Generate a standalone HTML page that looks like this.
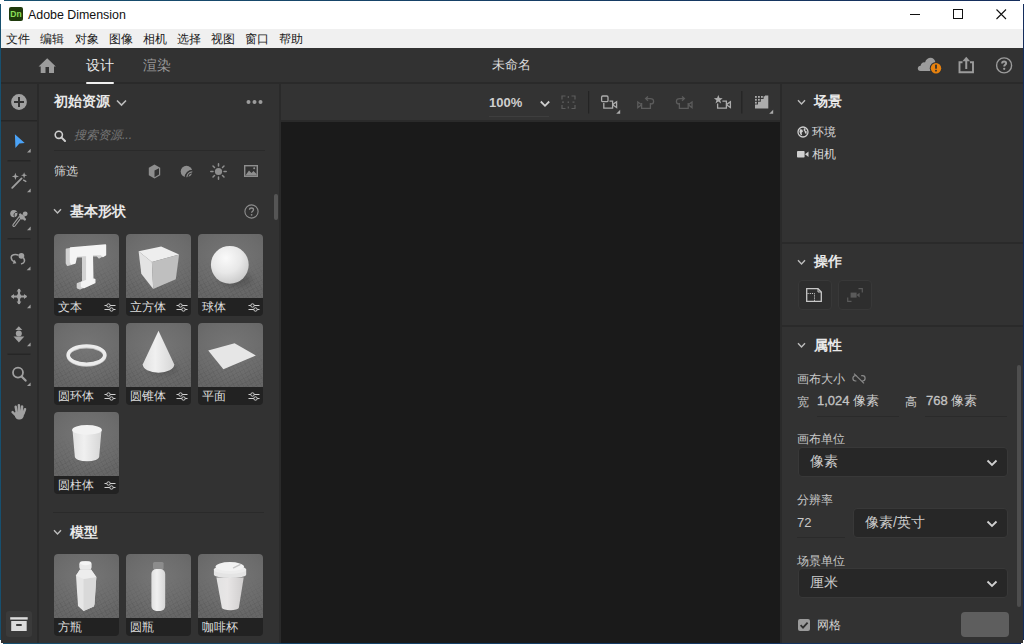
<!DOCTYPE html>
<html><head><meta charset="utf-8">
<style>
*{margin:0;padding:0;box-sizing:border-box}
html,body{width:1024px;height:644px;overflow:hidden;background:#fff;font-family:"Liberation Sans",sans-serif}
.a{position:absolute}
#frame{position:absolute;left:0;top:0;width:1024px;height:644px;background:linear-gradient(90deg,#17506f,#152d5c)}
#title{left:1px;top:1px;width:1022px;height:28px;background:#fff}
#menu{left:1px;top:29px;width:1022px;height:19px;background:#f0f0f0}
.mi{position:absolute;top:32px;font-size:11.5px;color:#1a1a1a;line-height:14px}
#topbar{left:1px;top:48px;width:1022px;height:34px;background:#323232}
#topline{left:1px;top:82px;width:1022px;height:2px;background:#2a2a2a}
#tools{left:1px;top:84px;width:36px;height:559px;background:#323232}
#toolsep{left:37px;top:84px;width:2px;height:559px;background:#2a2a2a}
#assets{left:39px;top:84px;width:240px;height:559px;background:#323232}
#asssep{left:279px;top:84px;width:2px;height:559px;background:#2a2a2a}
#vtool{left:281px;top:84px;width:499px;height:37px;background:#333}
#vline{left:281px;top:120px;width:499px;height:2px;background:#2a2a2a}
#canvas{left:281px;top:122px;width:499px;height:521px;background:#1a1a1a}
#rsep{left:780px;top:84px;width:2px;height:559px;background:#2a2a2a}
#right{left:782px;top:84px;width:241px;height:559px;background:#323232}
.w{color:#e6e6e6}
.h{font-weight:bold;font-size:14px;color:#e8e8e8;line-height:16px}
.t12{font-size:12px;line-height:14px;color:#d6d6d6}
.thumb{position:absolute;width:65px;height:82px;border-radius:4px;overflow:hidden;background:#222}
.thumb .img{position:absolute;left:0;top:0;width:65px;height:64px;background:radial-gradient(ellipse 70% 60% at 50% 40%,#767676,#6c6c6c 70%,#666 100%)}
.thumb .img::before{content:"";position:absolute;left:0;top:0;width:65px;height:64px;background:repeating-linear-gradient(62deg,rgba(0,0,0,0.045) 0 1px,transparent 1px 4px),repeating-linear-gradient(-28deg,rgba(0,0,0,0.045) 0 1px,transparent 1px 4px);-webkit-mask-image:linear-gradient(transparent 35%,#000 80%)}
.thumb .img svg{position:absolute;left:0;top:0}
.thumb .lab{position:absolute;left:4px;top:66px;font-size:11.5px;line-height:14px;color:#ddd;white-space:nowrap}
.thumb svg.sl{position:absolute;left:50px;top:69px}
.num{-webkit-text-stroke:0.3px #c4c4c4;color:#c4c4c4}
.hsep{position:absolute;height:2px;background:#2a2a2a}
.dd{position:absolute;background:#272727;border-radius:4px;border:1px solid #383838}
.dd .v{position:absolute;left:11px;top:5px;font-size:14px;line-height:16px;color:#cccccc}
.dd svg{position:absolute;right:9px;top:11px}
</style></head><body>
<div id="frame"></div>
<div id="title" class="a"></div>
<div class="a" style="left:0;top:0;width:4px;height:4px;background:#fff"></div>
<div class="a" style="left:1020px;top:0;width:4px;height:4px;background:#fff"></div>
<div class="a" style="left:0;top:640px;width:3px;height:4px;background:#fff"></div>
<div class="a" style="left:1021px;top:640px;width:3px;height:4px;background:#fff"></div>

<div class="a" style="left:9px;top:7px;width:14px;height:14px;border-radius:2px;background:#1f3a0c"></div>
<div class="a" style="left:9px;top:8px;width:14px;font-size:8.5px;line-height:12px;font-weight:bold;color:#8ee05a;text-align:center">Dn</div>
<div class="a" style="left:28px;top:8px;font-size:12.4px;line-height:15px;color:#111">Adobe Dimension</div>
<div class="a" style="left:910px;top:14px;width:10px;height:1px;background:#111"></div>
<div class="a" style="left:953px;top:9px;width:10px;height:10px;border:1px solid #111"></div>
<svg class="a" style="left:996px;top:9px" width="11" height="11"><path d="M0.5 0.5L10 10M10 0.5L0.5 10" stroke="#111" stroke-width="1.1"/></svg>
<div id="menu" class="a"></div>
<div class="mi" style="left:6px">文件</div>
<div class="mi" style="left:40px">编辑</div>
<div class="mi" style="left:75px">对象</div>
<div class="mi" style="left:109px">图像</div>
<div class="mi" style="left:143px">相机</div>
<div class="mi" style="left:177px">选择</div>
<div class="mi" style="left:211px">视图</div>
<div class="mi" style="left:245px">窗口</div>
<div class="mi" style="left:279px">帮助</div>
<div id="topbar" class="a"></div>
<div id="topline" class="a"></div>
<div id="tools" class="a"></div>
<div id="toolsep" class="a"></div>
<div id="assets" class="a"></div>
<div id="asssep" class="a"></div>
<div id="vtool" class="a"></div>
<div id="vline" class="a"></div>
<div id="canvas" class="a"></div>
<div id="rsep" class="a"></div>
<div id="right" class="a"></div>

<!-- topbar content -->
<svg class="a" style="left:38px;top:58px" width="19" height="16" viewBox="0 0 19 16"><path d="M9.2 0.3L17.8 8.6H16V15H11V9H7.5V15H2.7V8.6H0.6Z" fill="#9c9c9c"/></svg>
<div class="a" style="left:86px;top:57px;font-size:14px;line-height:16px;color:#e8e8e8">设计</div>
<div class="a" style="left:143px;top:57px;font-size:14px;line-height:16px;color:#9a9a9a">渲染</div>
<div class="a" style="left:86px;top:82px;width:28px;height:2px;border-radius:1px;background:#f0f0f0"></div>
<div class="a" style="left:492px;top:57px;font-size:13px;line-height:16px;color:#dcdcdc">未命名</div>
<svg class="a" style="left:917px;top:57px" width="26" height="18" viewBox="0 0 26 18"><path d="M3.5 14C1.5 14 0.8 12.6 0.8 11.5C0.8 10 2 8.8 3.6 8.8C4 6.2 6 4.8 8 5.4C9 2.2 11.5 0.6 14 0.8C16.6 1 18.4 3.2 18.4 6C18.4 6.6 18.3 7 18.2 7.4L16 14Z" fill="#9c9c9c"/><circle cx="19" cy="11.2" r="6.2" fill="#323232"/><circle cx="19" cy="11.2" r="5.2" fill="#e8820e"/><rect x="18.1" y="7.6" width="1.8" height="4.2" rx="0.6" fill="#323232"/><rect x="18.1" y="12.8" width="1.8" height="1.8" rx="0.6" fill="#323232"/></svg>
<svg class="a" style="left:958px;top:56px" width="17" height="18" viewBox="0 0 17 18"><path d="M4.5 6.2H1.5V16.2H15V6.2H12" fill="none" stroke="#9c9c9c" stroke-width="1.9"/><path d="M8.25 13V4.5" stroke="#9c9c9c" stroke-width="2"/><path d="M8.25 0.8L4.4 5.2H12.1Z" fill="#9c9c9c"/></svg>
<svg class="a" style="left:995px;top:56px" width="18" height="18" viewBox="0 0 18 18"><circle cx="9.1" cy="9.4" r="7.5" fill="none" stroke="#9c9c9c" stroke-width="1.4"/><path d="M7.1 7.4C7.1 6.1 8 5.5 9.1 5.5C10.3 5.5 11.1 6.2 11.1 7.3C11.1 8.8 9.2 8.9 9.2 10.6" fill="none" stroke="#9c9c9c" stroke-width="2"/><circle cx="9.2" cy="12.8" r="1.15" fill="#9c9c9c"/></svg>


<svg class="a" style="left:0;top:84px" width="38" height="560" viewBox="0 84 38 560">
<circle cx="19" cy="102" r="7.9" fill="#a0a0a0"/>
<path d="M14 102H24M19 97V107" stroke="#323232" stroke-width="2"/>
<rect x="1" y="120" width="36" height="1.5" fill="#262626"/>
<path d="M14.9 134.2L24.7 143L19.4 143.4L15.4 147.9Z" fill="#4ba3f7"/>
<path d="M27 152.5H30.7V148.8Z" fill="#a0a0a0"/>
<rect x="7.5" y="160" width="23" height="1.5" fill="#262626"/>
<path d="M12.2 187.8L21.6 178.4" stroke="#a0a0a0" stroke-width="1.8" stroke-linecap="round"/>
<path d="M15.4 172.8L16.3 175.5L19 176.4L16.3 177.3L15.4 180L14.5 177.3L11.8 176.4L14.5 175.5Z" fill="#a0a0a0"/>
<path d="M24.1 172.2L24.9 174.5L27.2 175.3L24.9 176.1L24.1 178.4L23.3 176.1L21 175.3L23.3 174.5Z" fill="#a0a0a0"/>
<path d="M23.6 180.2L25.8 181.4" stroke="#a0a0a0" stroke-width="1.4" stroke-linecap="round"/>
<path d="M27 192.3H30.7V188.6Z" fill="#a0a0a0"/>
<circle cx="13.8" cy="213.6" r="3.6" fill="#a0a0a0"/>
<path d="M14.6 216.6A2.6 2.6 0 0 1 17.2 212.4" stroke="#323232" stroke-width="1" fill="none"/>
<path d="M14 225.3L20.3 217" stroke="#a0a0a0" stroke-width="3.4" stroke-linecap="round"/>
<path d="M14 225.3L20.3 217" stroke="#323232" stroke-width="1.2" stroke-linecap="round"/>
<path d="M19.2 217.2L22.4 214.2L25 216.8L22 220Z" fill="#a0a0a0"/>
<path d="M20.2 214.6L24.8 219.4" stroke="#a0a0a0" stroke-width="2.4" stroke-linecap="round"/>
<circle cx="25.2" cy="213.8" r="2.4" fill="#a0a0a0"/>
<path d="M27 230.3H30.7V226.6Z" fill="#a0a0a0"/>
<rect x="7.5" y="238" width="23" height="1.5" fill="#262626"/>
<circle cx="21.4" cy="255.8" r="2.9" fill="#a0a0a0"/>
<path d="M18.6 255.2C15 253.8 11.2 254.8 11.2 257.6C11.2 259.6 12.6 261 14.4 261.6" stroke="#a0a0a0" stroke-width="1.5" fill="none"/>
<path d="M12.6 263.8L16.4 263.2L14.6 259.8Z" fill="#a0a0a0"/>
<path d="M23.6 258C25.2 260.4 24.6 263.4 21.6 263.8" stroke="#a0a0a0" stroke-width="1.5" fill="none" stroke-linecap="round"/>
<path d="M26.6 270.2H30.5V266.4Z" fill="#a0a0a0"/>
<path d="M19 289V304M11.5 296.5H26.5" stroke="#a0a0a0" stroke-width="2.2"/>
<path d="M19 288.5L16.6 291.5H21.4Z M19 304.5L16.6 301.5H21.4Z M11 296.5L14 294.1V298.9Z M27 296.5L24 294.1V298.9Z" fill="#a0a0a0"/>
<circle cx="19" cy="296.5" r="2.4" fill="#a0a0a0"/>
<path d="M27 308.3H30.6V304.6Z" fill="#a0a0a0"/>
<path d="M18.8 326.2L15.3 329.9H22.3Z" fill="#a0a0a0"/>
<circle cx="18.8" cy="333.4" r="3" fill="#a0a0a0"/>
<path d="M13.5 336.6H24.3L18.9 342.4Z" fill="#a0a0a0"/>
<path d="M27 346.2H30.6V342.6Z" fill="#a0a0a0"/>
<rect x="7.5" y="353.5" width="23" height="1.5" fill="#262626"/>
<circle cx="18" cy="372.6" r="5" stroke="#a0a0a0" stroke-width="1.8" fill="none"/>
<path d="M21.6 376.4L25.6 380.6" stroke="#a0a0a0" stroke-width="2.2" stroke-linecap="round"/>
<path d="M27 386H30.6V382.4Z" fill="#a0a0a0"/>
<g stroke="#a0a0a0" stroke-width="2.5" stroke-linecap="round"><path d="M15.7 406.8L16.9 413M18.9 405.3L19.3 412M22.1 406.5L21.6 412M25 409.2L23.4 413.5M12.6 412.2L16.2 415.6"/></g>
<path d="M15.2 412H24.6L23.6 416.5C23 418.6 21.6 419.4 19.8 419.4H18.6C17 419.4 15.6 418.6 15 416.6Z" fill="#a0a0a0"/>
<rect x="6" y="611" width="26" height="26" rx="3" fill="#3a3a3a"/>
<rect x="10.2" y="617.2" width="17.5" height="2.4" fill="#dcdcdc"/>
<path d="M11.2 621H26.7V631H11.2Z" fill="#dcdcdc"/>
<rect x="16.2" y="624" width="5.5" height="2" fill="#3a3a3a"/>
</svg>

<svg width="0" height="0" style="position:absolute"><defs>
<linearGradient id="gw" x1="0" y1="0" x2="1" y2="1"><stop offset="0" stop-color="#f6f6f6"/><stop offset="1" stop-color="#d2d2d2"/></linearGradient>
<radialGradient id="gs" cx="0.4" cy="0.32" r="0.72"><stop offset="0" stop-color="#fafafa"/><stop offset="0.55" stop-color="#e8e8e8"/><stop offset="1" stop-color="#c9c9c9"/></radialGradient><filter id="bl" x="-50%" y="-50%" width="200%" height="200%"><feGaussianBlur stdDeviation="3"/></filter>
<linearGradient id="gc" x1="0" y1="0" x2="1" y2="0"><stop offset="0" stop-color="#e0e0e0"/><stop offset="0.4" stop-color="#f0f0f0"/><stop offset="1" stop-color="#d6d6d6"/></linearGradient>
</defs></svg>
<div class="a h" style="left:54px;top:93px">初始资源</div>
<svg class="a" style="left:116px;top:99px" width="11" height="8" viewBox="0 0 11 8"><path d="M1 1.5L5.5 6L10 1.5" fill="none" stroke="#bdbdbd" stroke-width="1.6"/></svg>
<svg class="a" style="left:246px;top:99px" width="17" height="6"><circle cx="2.5" cy="3" r="2" fill="#9c9c9c"/><circle cx="8.5" cy="3" r="2" fill="#9c9c9c"/><circle cx="14.5" cy="3" r="2" fill="#9c9c9c"/></svg>
<svg class="a" style="left:54px;top:130px" width="12" height="12" viewBox="0 0 12 12"><circle cx="4.8" cy="4.8" r="3.6" fill="none" stroke="#cfcfcf" stroke-width="1.6"/><path d="M7.4 7.4L11 11" stroke="#cfcfcf" stroke-width="2" stroke-linecap="round"/></svg>
<div class="a" style="left:74px;top:128px;font-size:12px;line-height:14px;color:#767676;font-style:italic">搜索资源...</div>
<div class="a" style="left:54px;top:150px;width:211px;height:1px;background:#2a2a2a"></div>
<div class="a" style="left:54px;top:164px;font-size:12px;line-height:14px;color:#d8d8d8">筛选</div>
<svg class="a" style="left:148px;top:164px" width="13" height="15" viewBox="0 0 13 15"><path d="M6.5 0.6L12.2 3.8V11.2L6.5 14.4L0.8 11.2V3.8Z" fill="#8e8e8e"/><path d="M6.5 6.5L11 4.2V10.6L6.5 13.2Z" fill="#323232"/></svg>
<svg class="a" style="left:180px;top:165px" width="13" height="13" viewBox="0 0 13 13"><circle cx="6.5" cy="6.5" r="5.8" fill="#8e8e8e"/><path d="M5.5 12.5C5.5 8.5 8.5 5.5 12.5 5.5" stroke="#323232" stroke-width="1.6" fill="none"/><path d="M8 12C8.2 10 10 8.2 12 8" stroke="#323232" stroke-width="1.1" fill="none"/></svg>
<svg class="a" style="left:210px;top:163px" width="17" height="17" viewBox="0 0 17 17"><circle cx="8.5" cy="8.5" r="3.6" fill="#8e8e8e"/><path d="M8.5 0.8V3M8.5 14V16.2M0.8 8.5H3M14 8.5H16.2M3 3L4.5 4.5M12.5 12.5L14 14M3 14L4.5 12.5M12.5 4.5L14 3" stroke="#8e8e8e" stroke-width="1.5" stroke-linecap="round"/></svg>
<svg class="a" style="left:244px;top:165px" width="14" height="12" viewBox="0 0 14 12"><rect x="0.7" y="0.7" width="12.6" height="10.6" fill="none" stroke="#8e8e8e" stroke-width="1.4"/><path d="M1.4 10.6L5 5.5L7.5 8L9.5 6L12.6 9V10.6Z" fill="#8e8e8e"/><circle cx="10.2" cy="3.2" r="1" fill="#8e8e8e"/></svg>
<svg class="a" style="left:53px;top:208px" width="9" height="7" viewBox="0 0 9 7"><path d="M1 1.2L4.5 5L8 1.2" fill="none" stroke="#bdbdbd" stroke-width="1.4"/></svg>
<div class="a h" style="left:70px;top:203px">基本形状</div>
<svg class="a" style="left:244px;top:204px" width="15" height="15" viewBox="0 0 15 15"><circle cx="7.5" cy="7.5" r="6.6" fill="none" stroke="#8e8e8e" stroke-width="1.1"/><path d="M5.5 5.8C5.5 4.6 6.4 4 7.5 4C8.7 4 9.5 4.7 9.5 5.7C9.5 7.1 7.6 7.2 7.6 8.8" fill="none" stroke="#8e8e8e" stroke-width="1.3"/><circle cx="7.6" cy="10.8" r="0.9" fill="#8e8e8e"/></svg>
<div class="a" style="left:274px;top:194px;width:3.5px;height:26px;border-radius:2px;background:#555"></div>
<div class="thumb" style="left:54px;top:234px"><div class="img"><svg width="64" height="64" viewBox="0 0 64 64"><g transform="translate(-4,1.2)"><path d="M16.5 14L51.5 11L51.5 21L49 22.5L47 20.2L38.3 20.5L38.8 45L40.8 45.5L40.8 48.5L30 53.5L27.5 52.5L27.5 48.5L32.8 46.5L32.8 21.2L22.5 22L21 29L17.5 30L16.5 28Z" fill="#d2d2d2" stroke="#d2d2d2" stroke-width="1.6" stroke-linejoin="round"/></g><path d="M12.5 15.2L16.5 14L16.5 28L12.5 29.2Z M28.8 22.4L32.8 21.2L32.8 46.5L28.8 47.7Z" fill="#d2d2d2"/><path d="M16.5 14L51.5 11L51.5 21L49 22.5L47 20.2L38.3 20.5L38.8 45L40.8 45.5L40.8 48.5L30 53.5L27.5 52.5L27.5 48.5L32.8 46.5L32.8 21.2L22.5 22L21 29L17.5 30L16.5 28Z" fill="#f4f4f4" stroke="#f4f4f4" stroke-width="1.4" stroke-linejoin="round"/></svg></div><div class="lab">文本</div><svg class="sl" width="12" height="9" viewBox="0 0 12 9"><path d="M0.5 2.5H11.5M0.5 6.5H11.5" stroke="#d0d0d0" stroke-width="1.1"/><circle cx="4.5" cy="2.5" r="1.7" fill="#222" stroke="#d0d0d0" stroke-width="1"/><circle cx="7.5" cy="6.5" r="1.7" fill="#222" stroke="#d0d0d0" stroke-width="1"/></svg></div>
<div class="thumb" style="left:126px;top:234px"><div class="img"><svg width="64" height="64" viewBox="0 0 64 64"><path d="M12.6 17.3L35.2 12.6L53.1 20.6L25.9 27.9Z" fill="#eeeeee"/><path d="M12.6 17.3L25.9 27.9L27.2 55.1L15.3 39.8Z" fill="#e3e3e3"/><path d="M25.9 27.9L53.1 20.6L49.8 45.2L27.2 55.1Z" fill="#bfbfbf"/></svg></div><div class="lab">立方体</div><svg class="sl" width="12" height="9" viewBox="0 0 12 9"><path d="M0.5 2.5H11.5M0.5 6.5H11.5" stroke="#d0d0d0" stroke-width="1.1"/><circle cx="4.5" cy="2.5" r="1.7" fill="#222" stroke="#d0d0d0" stroke-width="1"/><circle cx="7.5" cy="6.5" r="1.7" fill="#222" stroke="#d0d0d0" stroke-width="1"/></svg></div>
<div class="thumb" style="left:198px;top:234px"><div class="img"><svg width="64" height="64" viewBox="0 0 64 64"><ellipse cx="38" cy="46" rx="16" ry="7" fill="#000" opacity="0.18" filter="url(#bl)"/><circle cx="31.8" cy="30.8" r="18.9" fill="url(#gs)"/></svg></div><div class="lab">球体</div><svg class="sl" width="12" height="9" viewBox="0 0 12 9"><path d="M0.5 2.5H11.5M0.5 6.5H11.5" stroke="#d0d0d0" stroke-width="1.1"/><circle cx="4.5" cy="2.5" r="1.7" fill="#222" stroke="#d0d0d0" stroke-width="1"/><circle cx="7.5" cy="6.5" r="1.7" fill="#222" stroke="#d0d0d0" stroke-width="1"/></svg></div>
<div class="thumb" style="left:54px;top:323px"><div class="img"><svg width="64" height="64" viewBox="0 0 64 64"><ellipse cx="32.5" cy="32.8" rx="18.3" ry="9.1" fill="none" stroke="#c4c4c4" stroke-width="3.6"/><ellipse cx="32.5" cy="32" rx="18.3" ry="9.1" fill="none" stroke="#ececec" stroke-width="3.4"/></svg></div><div class="lab">圆环体</div><svg class="sl" width="12" height="9" viewBox="0 0 12 9"><path d="M0.5 2.5H11.5M0.5 6.5H11.5" stroke="#d0d0d0" stroke-width="1.1"/><circle cx="4.5" cy="2.5" r="1.7" fill="#222" stroke="#d0d0d0" stroke-width="1"/><circle cx="7.5" cy="6.5" r="1.7" fill="#222" stroke="#d0d0d0" stroke-width="1"/></svg></div>
<div class="thumb" style="left:126px;top:323px"><div class="img"><svg width="64" height="64" viewBox="0 0 64 64"><ellipse cx="37" cy="46" rx="15" ry="6" fill="#000" opacity="0.15" filter="url(#bl)"/><path d="M32.5 7.7L16.7 41.6A15.8 8.1 0 0 0 48.3 41.6Z" fill="url(#gc)"/></svg></div><div class="lab">圆锥体</div><svg class="sl" width="12" height="9" viewBox="0 0 12 9"><path d="M0.5 2.5H11.5M0.5 6.5H11.5" stroke="#d0d0d0" stroke-width="1.1"/><circle cx="4.5" cy="2.5" r="1.7" fill="#222" stroke="#d0d0d0" stroke-width="1"/><circle cx="7.5" cy="6.5" r="1.7" fill="#222" stroke="#d0d0d0" stroke-width="1"/></svg></div>
<div class="thumb" style="left:198px;top:323px"><div class="img"><svg width="64" height="64" viewBox="0 0 64 64"><path d="M10.2 27.4L36.6 20.3L57.9 32.5L25.4 46.3Z" fill="#e6e6e6"/></svg></div><div class="lab">平面</div><svg class="sl" width="12" height="9" viewBox="0 0 12 9"><path d="M0.5 2.5H11.5M0.5 6.5H11.5" stroke="#d0d0d0" stroke-width="1.1"/><circle cx="4.5" cy="2.5" r="1.7" fill="#222" stroke="#d0d0d0" stroke-width="1"/><circle cx="7.5" cy="6.5" r="1.7" fill="#222" stroke="#d0d0d0" stroke-width="1"/></svg></div>
<div class="thumb" style="left:54px;top:412px"><div class="img"><svg width="64" height="64" viewBox="0 0 64 64"><path d="M18.5 18L20.8 44.5A12.2 4.8 0 0 0 45.2 44.5L47.5 18Z" fill="url(#gc)"/><ellipse cx="33" cy="17.9" rx="14.9" ry="4.8" fill="#f2f2f2"/></svg></div><div class="lab">圆柱体</div><svg class="sl" width="12" height="9" viewBox="0 0 12 9"><path d="M0.5 2.5H11.5M0.5 6.5H11.5" stroke="#d0d0d0" stroke-width="1.1"/><circle cx="4.5" cy="2.5" r="1.7" fill="#222" stroke="#d0d0d0" stroke-width="1"/><circle cx="7.5" cy="6.5" r="1.7" fill="#222" stroke="#d0d0d0" stroke-width="1"/></svg></div>
<div class="a" style="left:53px;top:512px;width:211px;height:1px;background:#2a2a2a"></div>
<svg class="a" style="left:53px;top:529px" width="9" height="7" viewBox="0 0 9 7"><path d="M1 1.2L4.5 5L8 1.2" fill="none" stroke="#bdbdbd" stroke-width="1.4"/></svg>
<div class="a h" style="left:70px;top:524px">模型</div>
<div class="thumb" style="left:54px;top:554px"><div class="img"><svg width="64" height="64" viewBox="0 0 64 64"><path d="M26 15.5L37 15.5L42.3 23L40.5 50L39.8 52.5L29.5 57L24 52L22 21.5Z" fill="#e6e6e6"/><path d="M29.5 25L42.3 23L40.5 50L39.8 52.5L29.5 57Z" fill="#d9d9d9"/><path d="M26 15.5L37 15.5L42.3 23L29.5 25L22 21.5Z" fill="#ededed"/><rect x="25.3" y="7.2" width="12.3" height="8.6" rx="3" fill="#e9e9e9"/><ellipse cx="31.5" cy="9.2" rx="5.6" ry="2" fill="#f5f5f5"/></svg></div><div class="lab">方瓶</div></div>
<div class="thumb" style="left:126px;top:554px"><div class="img"><svg width="64" height="64" viewBox="0 0 64 64"><rect x="27" y="8.1" width="10.6" height="7.5" rx="1.5" fill="#8c8c8c"/><rect x="25.4" y="15" width="13.8" height="42" rx="5" fill="url(#gc)"/></svg></div><div class="lab">圆瓶</div></div>
<div class="thumb" style="left:198px;top:554px"><div class="img"><svg width="64" height="64" viewBox="0 0 64 64"><defs><linearGradient id="gcup" x1="0" y1="0" x2="1" y2="0"><stop offset="0" stop-color="#e2e2e2"/><stop offset="0.4" stop-color="#e8e6e6"/><stop offset="1" stop-color="#cfcdcd"/></linearGradient></defs><path d="M18.4 23.5L23.9 54A8.5 2.4 0 0 0 40.8 54L45.7 23.5Z" fill="url(#gcup)"/><path d="M15.9 15.5H48.2V20.5A16.15 3.6 0 0 1 15.9 20.5Z" fill="#e4e4e4"/><ellipse cx="32" cy="15.5" rx="16.1" ry="4.4" fill="#ececec"/><ellipse cx="31.8" cy="12.6" rx="14.2" ry="4.5" fill="#f2f2f2"/><path d="M35.5 13.8L42 10.6" stroke="#c4c4c4" stroke-width="1.4" stroke-linecap="round"/></svg></div><div class="lab">咖啡杯</div></div>


<div class="a" style="left:489px;top:95px;font-size:13px;line-height:16px;font-weight:bold;color:#cfcfcf">100%</div>
<svg class="a" style="left:539px;top:100px" width="12" height="8" viewBox="0 0 12 8"><path d="M1.8 1.5L6 5.8L10.2 1.5" fill="none" stroke="#cfcfcf" stroke-width="1.8"/></svg>
<div class="a" style="left:489px;top:116px;width:60px;height:1px;background:#3e3e3e"></div>
<svg class="a" style="left:556px;top:88px" width="224" height="30" viewBox="556 88 224 30">
<g stroke="#5c5c5c" stroke-width="1.2" fill="none">
<path d="M562 99.5V96H565.5M571.5 96H575V99.5M575 105V108.5H571.5M565.5 108.5H562V105M568.3 96V98M568.3 106.5V108.5M562 102.2H564M572.5 102.2H574.5"/>
</g>
<rect x="567.6" y="101.5" width="1.4" height="1.4" fill="#5c5c5c"/>
<rect x="588" y="91" width="1.2" height="22.5" fill="#242424"/>
<g stroke="#acacac" stroke-width="1.3" fill="none">
<rect x="601.6" y="96" width="6.4" height="5.6" rx="1.2"/>
<path d="M603.8 103V108.2H612.6V101.2H609.5"/>
<path d="M612.6 104.6L616.6 101.8V107.6L612.6 104.8"/>
</g>
<path d="M616.2 113.8H620.2V109.8Z" fill="#acacac"/>
<g stroke="#5c5c5c" stroke-width="1.3" fill="none">
<path d="M641.6 103V108.3H650.4V103"/>
<path d="M641.6 104.8L637.8 102V107.6L641.6 104.8"/>
<path d="M646 98.6H650.2C652.4 98.6 653.6 99.8 653.6 101.4C653.6 103 652.4 104 650.6 104"/>
<path d="M648 96.4L645.6 98.6L648 100.8"/>
</g>
<g stroke="#5c5c5c" stroke-width="1.3" fill="none">
<path d="M679.4 103V108.3H688.2V103"/>
<path d="M688.2 104.8L692 102V107.6L688.2 104.8"/>
<path d="M684 98.6H679.8C677.6 98.6 676.4 99.8 676.4 101.4C676.4 103 677.6 104 679.4 104"/>
<path d="M682 96.4L684.4 98.6L682 100.8"/>
</g>
<path d="M718.3 95L719.5 98.1L722.7 98.2L720.2 100.3L721.1 103.4L718.3 101.6L715.5 103.4L716.4 100.3L713.9 98.2L717.1 98.1Z" fill="#acacac"/>
<g stroke="#acacac" stroke-width="1.3" fill="none">
<path d="M717.6 103.6V108.2H726.4V101.2H722.4"/>
<path d="M726.4 104.6L730.4 101.8V107.6L726.4 104.8"/>
</g>
<rect x="741.2" y="91" width="1.2" height="22.5" fill="#242424"/>
<path d="M768.3 95.5V108.6H755V104.5H758V101.8H760.8V99H763.6V96.2H765V95.5Z" fill="#acacac"/>
<g fill="#acacac"><rect x="755" y="96" width="1.8" height="1.8"/><rect x="758" y="96" width="1.8" height="1.8"/><rect x="761" y="96" width="1.8" height="1.8"/><rect x="755" y="98.9" width="1.8" height="1.8"/><rect x="758" y="98.9" width="1.8" height="1.8"/><rect x="755" y="101.8" width="1.8" height="1.8"/></g>
<path d="M769.2 113.8H773.2V109.8Z" fill="#acacac"/>
</svg>


<svg class="a" style="left:797px;top:99px" width="9" height="7" viewBox="0 0 9 7"><path d="M1 1.2L4.5 5L8 1.2" fill="none" stroke="#bdbdbd" stroke-width="1.4"/></svg>
<div class="a h" style="left:814px;top:93px">场景</div>
<svg class="a" style="left:797px;top:126px" width="12" height="12" viewBox="0 0 12 12"><circle cx="6" cy="6" r="5" fill="none" stroke="#cfcfcf" stroke-width="1.3"/><path d="M3 3.2L5.2 3.6L6 5.6L4.6 6.8L5.2 9.6L3.4 8.4L2.4 5.8Z M7 2L8.6 3L8.2 4.4L9.8 5.6L9.4 8L8 7.2L7.6 5.4L6.6 4.2Z" fill="#cfcfcf"/></svg>
<div class="a" style="left:812px;top:125px;font-size:12px;line-height:14px;color:#d8d8d8">环境</div>
<svg class="a" style="left:797px;top:151px" width="12" height="7" viewBox="0 0 12 7"><rect x="0" y="0" width="7.6" height="6.6" rx="0.8" fill="#cfcfcf"/><path d="M8 3.3L11.5 0.5V6.1Z" fill="#cfcfcf"/></svg>
<div class="a" style="left:812px;top:147px;font-size:12px;line-height:14px;color:#d8d8d8">相机</div>
<div class="hsep" style="left:782px;top:242px;width:241px"></div>
<svg class="a" style="left:797px;top:259px" width="9" height="7" viewBox="0 0 9 7"><path d="M1 1.2L4.5 5L8 1.2" fill="none" stroke="#bdbdbd" stroke-width="1.4"/></svg>
<div class="a h" style="left:814px;top:253px">操作</div>
<div class="a" style="left:798px;top:280px;width:34px;height:30px;border-radius:4px;background:#2e2e2e;border:1px solid #383838"></div>
<div class="a" style="left:838px;top:280px;width:34px;height:30px;border-radius:4px;background:#2e2e2e;border:1px solid #383838"></div>
<svg class="a" style="left:806px;top:288px" width="16" height="14" viewBox="0 0 16 14"><path d="M0.7 0.7H12L15.3 4V13.3H0.7Z" fill="none" stroke="#c8c8c8" stroke-width="1.3"/><path d="M12 0.7V4H15.3" fill="none" stroke="#c8c8c8" stroke-width="1"/><path d="M1.5 5.5H8.5V13" fill="none" stroke="#c8c8c8" stroke-width="1" stroke-dasharray="1.2 1"/></svg>
<svg class="a" style="left:847px;top:288px" width="16" height="14" viewBox="0 0 16 14"><path d="M0.7 9.5V13.3H4.5M11.5 0.7H15.3V4.5" fill="none" stroke="#5a5a5a" stroke-width="1.2"/><rect x="3.6" y="4.6" width="6" height="5" fill="#5a5a5a"/><path d="M9.6 7.1L12.6 4.8V9.4Z" fill="#5a5a5a"/></svg>
<div class="hsep" style="left:782px;top:325px;width:241px"></div>
<svg class="a" style="left:797px;top:342px" width="9" height="7" viewBox="0 0 9 7"><path d="M1 1.2L4.5 5L8 1.2" fill="none" stroke="#bdbdbd" stroke-width="1.4"/></svg>
<div class="a h" style="left:814px;top:337px">属性</div>
<div class="a" style="left:797px;top:372px;font-size:11.5px;line-height:14px;color:#c8c8c8">画布大小</div>
<svg class="a" style="left:852px;top:373px" width="14" height="11" viewBox="0 0 14 11"><path d="M4.8 2.6H3.5C2 2.6 0.9 3.8 0.9 5.3C0.9 6.8 2 8 3.5 8H4.4M9.2 2.6H10.5C12 2.6 13.1 3.8 13.1 5.3C13.1 6.8 12 8 10.5 8H9.6M2 0.6L12 10.4" fill="none" stroke="#8a8a8a" stroke-width="1.2"/></svg>
<div class="a" style="left:797px;top:395px;font-size:12px;line-height:14px;color:#c8c8c8">宽</div>
<div class="a" style="left:817px;top:393px;font-size:13px;line-height:15px;color:#d0d0d0"><span class="num">1,024</span> 像素</div>
<div class="a" style="left:817px;top:416px;width:82px;height:1px;background:#2a2a2a"></div>
<div class="a" style="left:905px;top:395px;font-size:12px;line-height:14px;color:#c8c8c8">高</div>
<div class="a" style="left:926px;top:393px;font-size:13px;line-height:15px;color:#d0d0d0"><span class="num">768</span> 像素</div>
<div class="a" style="left:925px;top:416px;width:82px;height:1px;background:#2a2a2a"></div>
<div class="a" style="left:797px;top:432px;font-size:11.5px;line-height:14px;color:#c8c8c8">画布单位</div>
<div class="dd" style="left:798px;top:447px;width:210px;height:30px"><div class="v">像素</div><svg width="12" height="8" viewBox="0 0 12 8"><path d="M1.5 1.5L6 6L10.5 1.5" fill="none" stroke="#d0d0d0" stroke-width="1.8"/></svg></div>
<div class="a" style="left:797px;top:493px;font-size:11.5px;line-height:14px;color:#c8c8c8">分辨率</div>
<div class="a" style="left:797px;top:515px;font-size:13px;line-height:15px;color:#c8c8c8">72</div>
<div class="a" style="left:797px;top:537px;width:48px;height:1px;background:#2a2a2a"></div>
<div class="dd" style="left:853px;top:508px;width:155px;height:30px"><div class="v">像素/英寸</div><svg width="12" height="8" viewBox="0 0 12 8"><path d="M1.5 1.5L6 6L10.5 1.5" fill="none" stroke="#d0d0d0" stroke-width="1.8"/></svg></div>
<div class="a" style="left:797px;top:554px;font-size:11.5px;line-height:14px;color:#c8c8c8">场景单位</div>
<div class="dd" style="left:798px;top:568px;width:210px;height:30px"><div class="v">厘米</div><svg width="12" height="8" viewBox="0 0 12 8"><path d="M1.5 1.5L6 6L10.5 1.5" fill="none" stroke="#d0d0d0" stroke-width="1.8"/></svg></div>
<svg class="a" style="left:798px;top:619px" width="12" height="12" viewBox="0 0 12 12"><rect x="0" y="0" width="12" height="12" rx="2" fill="#9a9a9a"/><path d="M2.6 6.2L5 8.6L9.6 3.6" fill="none" stroke="#2e2e2e" stroke-width="1.8"/></svg>
<div class="a" style="left:817px;top:618px;font-size:12px;line-height:14px;color:#d0d0d0">网格</div>
<div class="a" style="left:961px;top:612px;width:48px;height:25px;border-radius:4px;background:#5e5e5e"></div>
<div class="a" style="left:1017px;top:365px;width:4px;height:242px;border-radius:2px;background:#4e4e4e"></div>


</body></html>
